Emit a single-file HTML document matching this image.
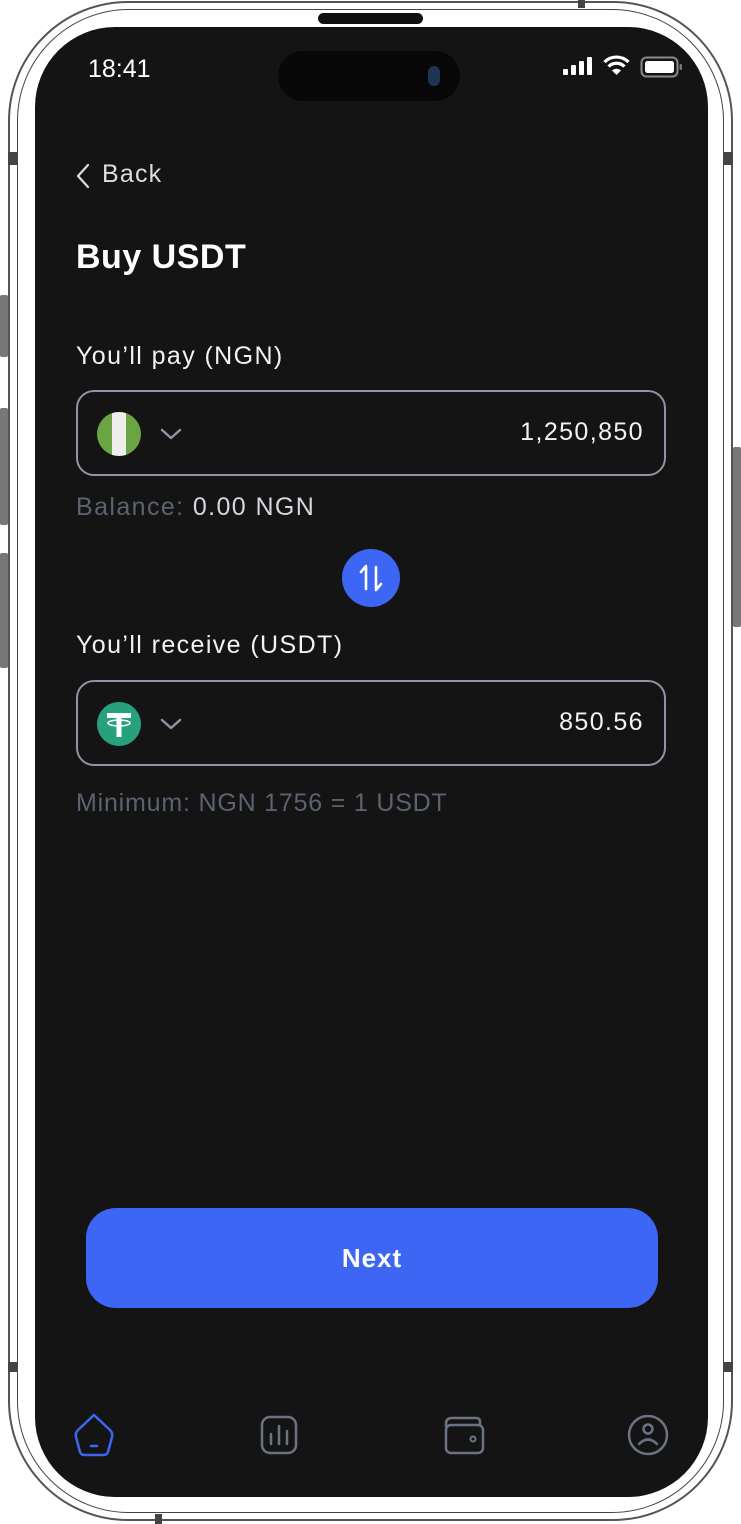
<!DOCTYPE html>
<html><head><meta charset="utf-8"><style>
*{margin:0;padding:0;box-sizing:border-box}
html,body{width:741px;height:1524px;background:#fff;overflow:hidden;font-family:"Liberation Sans",sans-serif}
.abs{position:absolute}
.frame{left:8px;top:1px;width:725px;height:1520px;border:2px solid #555;border-radius:120px;background:#fff}
.frame2{left:17px;top:9px;width:707px;height:1504px;border:1.5px solid #444;border-radius:112px}
.screen{left:35px;top:27px;width:673px;height:1470px;background:#141414;border-radius:80px;overflow:hidden}
.t{position:absolute;white-space:nowrap}
.b{font-size:25px;letter-spacing:1.4px}
.box{position:absolute;left:41px;width:590px;height:86px;border:2px solid #8d94a3;border-radius:18px}
</style></head><body>
<div class="abs frame"></div>
<div class="abs frame2"></div>
<div class="abs" style="left:0;top:295px;width:8px;height:62px;background:#777;border-radius:2px"></div>
<div class="abs" style="left:0;top:408px;width:8px;height:117px;background:#777;border-radius:2px"></div>
<div class="abs" style="left:0;top:553px;width:8px;height:115px;background:#777;border-radius:2px"></div>
<div class="abs" style="left:733px;top:447px;width:8px;height:180px;background:#777;border-radius:2px"></div>
<div class="abs" style="left:8px;top:152px;width:9px;height:13px;background:#444"></div>
<div class="abs" style="left:724px;top:152px;width:9px;height:13px;background:#444"></div>
<div class="abs" style="left:8px;top:1362px;width:9px;height:10px;background:#444"></div>
<div class="abs" style="left:724px;top:1362px;width:9px;height:10px;background:#444"></div>
<div class="abs" style="left:578px;top:0;width:7px;height:8px;background:#444"></div>
<div class="abs" style="left:155px;top:1514px;width:7px;height:10px;background:#444"></div>
<div class="abs" style="left:318px;top:13px;width:105px;height:11px;background:#111;border-radius:6px"></div>
<div class="abs screen">
  <div class="abs" style="left:243px;top:24px;width:182px;height:50px;background:#080808;border-radius:25px"></div>
  <div class="abs" style="left:393px;top:39px;width:12px;height:20px;border-radius:6px;background:#1d3550"></div>
  <div class="t" style="left:53px;top:28px;color:#fff;font-size:25px">18:41</div>
  <svg class="abs" style="left:525px;top:27px" width="125" height="26" viewBox="0 0 125 26">
    <rect x="3" y="15" width="5" height="6" rx="1" fill="#fff"/><rect x="11" y="11" width="5" height="10" rx="1" fill="#fff"/><rect x="19" y="7" width="5" height="14" rx="1" fill="#fff"/><rect x="27" y="3" width="5" height="18" rx="1" fill="#fff"/>
    <path d="M56.5 21 L52 16.5 A6.5 6.5 0 0 1 61 16.5 Z" fill="#fff"/>
    <path d="M48.5 12.5 A11.5 11.5 0 0 1 64.5 12.5" stroke="#fff" stroke-width="3.2" fill="none"/>
    <path d="M44.5 8 A17 17 0 0 1 68.5 8" stroke="#fff" stroke-width="3.2" fill="none"/>
    <rect x="81.5" y="3.5" width="36" height="19" rx="5" stroke="#8a8a8a" stroke-width="2" fill="none"/>
    <rect x="85" y="7" width="29" height="12" rx="2.5" fill="#fff"/>
    <rect x="119.5" y="10" width="2.5" height="6" rx="1" fill="#777"/>
  </svg>
  <svg class="abs" style="left:40px;top:136px" width="16" height="26"><path d="M13 2 L3 13 L13 24" stroke="#ddd" stroke-width="2.2" fill="none" stroke-linecap="round" stroke-linejoin="round"/></svg>
  <div class="t" style="left:67px;top:133px;color:#ddd;font-size:25px;letter-spacing:1.2px">Back</div>
  <div class="t" style="left:41px;top:211px;color:#fff;font-size:34px;font-weight:bold;letter-spacing:0.5px">Buy USDT</div>
  <div class="t b" style="left:41px;top:315px;color:#f2f2f2">You’ll pay (NGN)</div>
  <div class="box" style="top:363px">
    <div class="abs" style="left:19px;top:20px;width:44px;height:44px;border-radius:50%;overflow:hidden;background:#6aa443"><div class="abs" style="left:15px;top:0;width:14px;height:44px;background:#eee"></div></div>
    <svg class="abs" style="left:81px;top:35px" width="24" height="14"><path d="M3 3 L12 11 L21 3" stroke="#8d94a3" stroke-width="2.5" fill="none" stroke-linecap="round" stroke-linejoin="round"/></svg>
    <div class="t b" style="right:20px;top:26px;color:#f2f2f2">1,250,850</div>
  </div>
  <div class="t b" style="left:41px;top:466px;color:#5b6270">Balance: <span style="color:#d4d7dd">0.00 NGN</span></div>
  <div class="abs" style="left:307px;top:522px;width:58px;height:58px;border-radius:50%;background:#3d66f5">
    <svg width="58" height="58"><path d="M24 40 V17 L19 23 M34 18 V41 L39 35" stroke="#fff" stroke-width="2.6" fill="none" stroke-linecap="round" stroke-linejoin="round"/></svg>
  </div>
  <div class="t b" style="left:41px;top:604px;color:#f2f2f2">You’ll receive (USDT)</div>
  <div class="box" style="top:653px">
    <div class="abs" style="left:19px;top:20px;width:44px;height:44px;border-radius:50%;background:#26a17b">
      <svg width="44" height="44"><rect x="10" y="11" width="24" height="5" fill="#fff"/><rect x="19.5" y="11" width="5" height="24" fill="#fff"/><ellipse cx="22" cy="21" rx="11" ry="3" stroke="#fff" stroke-width="1.5" fill="none"/></svg>
    </div>
    <svg class="abs" style="left:81px;top:35px" width="24" height="14"><path d="M3 3 L12 11 L21 3" stroke="#8d94a3" stroke-width="2.5" fill="none" stroke-linecap="round" stroke-linejoin="round"/></svg>
    <div class="t b" style="right:20px;top:26px;color:#f2f2f2">850.56</div>
  </div>
  <div class="t" style="left:41px;top:762px;font-size:25px;letter-spacing:0.8px;color:#5b6270">Minimum: NGN 1756 = 1 USDT</div>
  <div class="abs" style="left:51px;top:1181px;width:572px;height:100px;border-radius:30px;background:#3d66f5;color:#fff;font-size:26px;letter-spacing:1px;font-weight:bold;text-align:center;line-height:100px">Next</div>
  <svg class="abs" style="left:0;top:1382px" width="673" height="50">
    <path d="M59 6 L43 21 Q40 24 41 28 L45 43 Q46 46 50 46 H68 Q72 46 73 43 L77 28 Q78 24 75 21 Z" stroke="#3d66f5" stroke-width="2.5" fill="none" stroke-linejoin="round"/>
    <path d="M56 37 H62" stroke="#3d66f5" stroke-width="2.5" stroke-linecap="round"/>
    <rect x="227" y="8" width="34" height="36" rx="8" stroke="#6b7383" stroke-width="2.5" fill="none"/>
    <path d="M236 25 V35 M244 17 V35 M252 22 V35" stroke="#6b7383" stroke-width="2.5" stroke-linecap="round"/>
    <path d="M411 18 V15 Q411 9 417 9 H441 Q445 9 445 13 V16" stroke="#6b7383" stroke-width="2.5" fill="none" stroke-linejoin="round"/>
    <rect x="411" y="16" width="37" height="28" rx="5" stroke="#6b7383" stroke-width="2.5" fill="none"/>
    <circle cx="438" cy="30" r="2.5" stroke="#6b7383" stroke-width="2" fill="none"/>
    <circle cx="613" cy="26" r="19" stroke="#6b7383" stroke-width="2.5" fill="none"/>
    <circle cx="613" cy="20" r="4.5" stroke="#6b7383" stroke-width="2.5" fill="none"/>
    <path d="M604 35 Q613 26 622 35" stroke="#6b7383" stroke-width="2.5" fill="none" stroke-linecap="round"/>
  </svg>
</div>
</body></html>
